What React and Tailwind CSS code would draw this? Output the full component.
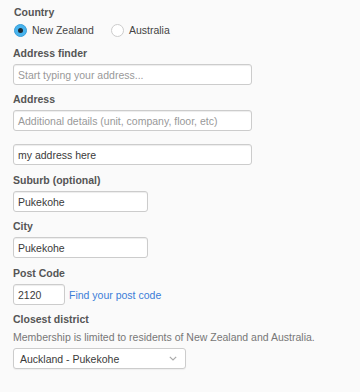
import React from "react";

const font = { fontFamily: '"Liberation Sans", Arial, sans-serif' };

function Label({ children, className = "" }) {
  return (
    <div className={`text-[10.5px] leading-[14px] font-bold text-[#555] mb-[4px] ${className}`}>{children}</div>
  );
}

function Input({ w, value, placeholder }) {
  return (
    <div
      className={`${w} h-[21px] bg-white border border-[#ccc] rounded-[3px] shadow-[inset_0_1px_1px_rgba(0,0,0,0.075)] flex items-center px-[4px] text-[10.5px] leading-[14px] ${value ? "text-[#3a3a3a]" : "text-[#999]"}`}
    >
      {value || placeholder}
    </div>
  );
}

export default function App() {
  return (
    <div style={font} className="w-[360px] h-[392px] bg-[#fafafa] pl-[13px] pt-[5px] leading-[14px]">
      <Label className="mb-[2px] pl-[1px]">Country</Label>
      <div className="flex items-center h-[14px] text-[10.5px] leading-[14px] text-[#444] mb-[9px]">
        <span className="w-[13px] h-[13px] rounded-full bg-[#48b4ee] border border-[#3a9fd8] flex items-center justify-center ml-[1px]">
          <span className="w-[5px] h-[5px] rounded-full bg-[#1e2a33]"></span>
        </span>
        <span className="ml-[5px]">New Zealand</span>
        <span className="w-[13px] h-[13px] rounded-full bg-white border border-[#ccc] ml-[17px]"></span>
        <span className="ml-[5px]">Australia</span>
      </div>

      <Label>Address finder</Label>
      <Input w="w-[239px]" placeholder="Start typing your address..." />

      <Label className="mt-[7px]">Address</Label>
      <Input w="w-[239px]" placeholder="Additional details (unit, company, floor, etc)" />
      <div className="h-[13px]"></div>
      <Input w="w-[239px]" value="my address here" />

      <Label className="mt-[8px]">Suburb (optional)</Label>
      <Input w="w-[135px]" value="Pukekohe" />

      <Label className="mt-[7px]">City</Label>
      <Input w="w-[135px]" value="Pukekohe" />

      <Label className="mt-[8px]">Post Code</Label>
      <div className="flex items-center">
        <Input w="w-[52px]" value="2120" />
        <span className="ml-[4px] text-[10.5px] leading-[14px] text-[#3b7dd8]">Find your post code</span>
      </div>

      <Label className="mt-[7px] mb-0">Closest district</Label>
      <div className="text-[10.5px] leading-[14px] text-[#777] mb-[4px]">
        Membership is limited to residents of New Zealand and Australia.
      </div>
      <div className="w-[173px] h-[21px] bg-white border border-[#ccc] rounded-[3px] shadow-[0_1px_1px_rgba(0,0,0,0.05)] flex items-center justify-between pl-[6px] pr-[5px] text-[10.5px] leading-[14px] text-[#3a3a3a]">
        <span>Auckland - Pukekohe</span>
        <svg width="8" height="5" viewBox="0 0 8 5" className="mr-[3px]">
          <path d="M0.8 0.8 L4 4 L7.2 0.8" fill="none" stroke="#aaa" strokeWidth="1.2" />
        </svg>
      </div>
    </div>
  );
}
